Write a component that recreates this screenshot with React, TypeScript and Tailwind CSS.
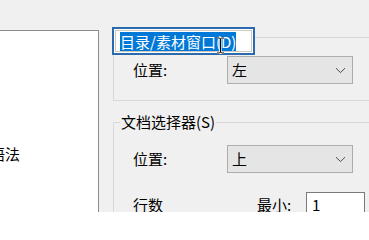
import React from "react";

function Chevron() {
  return (
    <svg width="11" height="7" viewBox="0 0 11 7" className="shrink-0">
      <path d="M1 1.2 L5.5 5.6 L10 1.2" fill="none" stroke="#4a4a4a" strokeWidth="1" />
    </svg>
  );
}

function Combo({ value }: { value: string }) {
  return (
    <div className="w-[126px] h-[28px] bg-[#e5e5e5] border border-[#adadad] flex items-center justify-between pl-[4px] pr-[6px]">
      <span>{value}</span>
      <Chevron />
    </div>
  );
}

function IBeam() {
  return (
    <svg width="9" height="17" viewBox="0 0 9 17" className="absolute left-[102px] top-[8px]">
      <path d="M1 1 H3.5 L4.5 2 L5.5 1 H8 M4.5 2 V15 M1 16 H3.5 L4.5 15 L5.5 16 H8" fill="none" stroke="#ffffff" strokeWidth="2.2" />
      <path d="M1 1 H3.5 L4.5 2 L5.5 1 H8 M4.5 2 V15 M1 16 H3.5 L4.5 15 L5.5 16 H8" fill="none" stroke="#000000" strokeWidth="1" />
    </svg>
  );
}

export default function App() {
  return (
    <div className="w-[369px] h-[212px] overflow-hidden bg-[#f0f0f0] flex text-[15px] leading-[20px] text-black font-['Noto_Sans_CJK_SC','Microsoft_YaHei',sans-serif]">
      {/* left list panel */}
      <div className="w-[99px] h-[200px] mt-[30px] shrink-0 bg-white border-t border-r border-[#8c8c8c] pt-[113px] overflow-hidden">
        <div className="ml-[-10px] whitespace-nowrap">语法</div>
      </div>

      {/* right settings */}
      <div className="flex-1 min-w-0 pl-[14px] pt-[37px]">
        {/* group 1: title is the rename box */}
        <div className="w-[280px] h-[64px] border-t border-l border-b border-[#d9d9d9]">
          <div className="relative w-[143px] h-[28px] mt-[-11px] ml-[-2px] border-2 border-[#2a6aae] bg-white p-[1px]">
            <div className="h-full border border-[#cfc8bc] bg-white flex items-center pl-[4px]">
              <span className="bg-[#0078d7] text-white leading-[19px] whitespace-nowrap">目录/素材窗口(D)</span>
            </div>
            <IBeam />
          </div>
          <div className="flex items-center mt-[1px] pl-[19px]">
            <span className="w-[94px]">位置:</span>
            <Combo value="左" />
          </div>
        </div>

        {/* group 2 */}
        <div className="w-[280px] h-[120px] mt-[21px] border-t border-l border-[#d9d9d9]">
          <div className="mt-[-11px] ml-[6px] px-[1px] bg-[#f0f0f0] w-fit whitespace-nowrap">文档选择器(S)</div>
          <div className="flex items-center mt-[13px] pl-[19px]">
            <span className="w-[94px]">位置:</span>
            <Combo value="上" />
          </div>
          <div className="flex items-center mt-[19px] pl-[19px]">
            <span className="w-[124px]">行数</span>
            <span className="w-[49px]">最小:</span>
            <div className="w-[59px] h-[25px] bg-white border border-[#7a7a7a] pl-[5px] flex items-center">1</div>
          </div>
        </div>
      </div>
    </div>
  );
}
